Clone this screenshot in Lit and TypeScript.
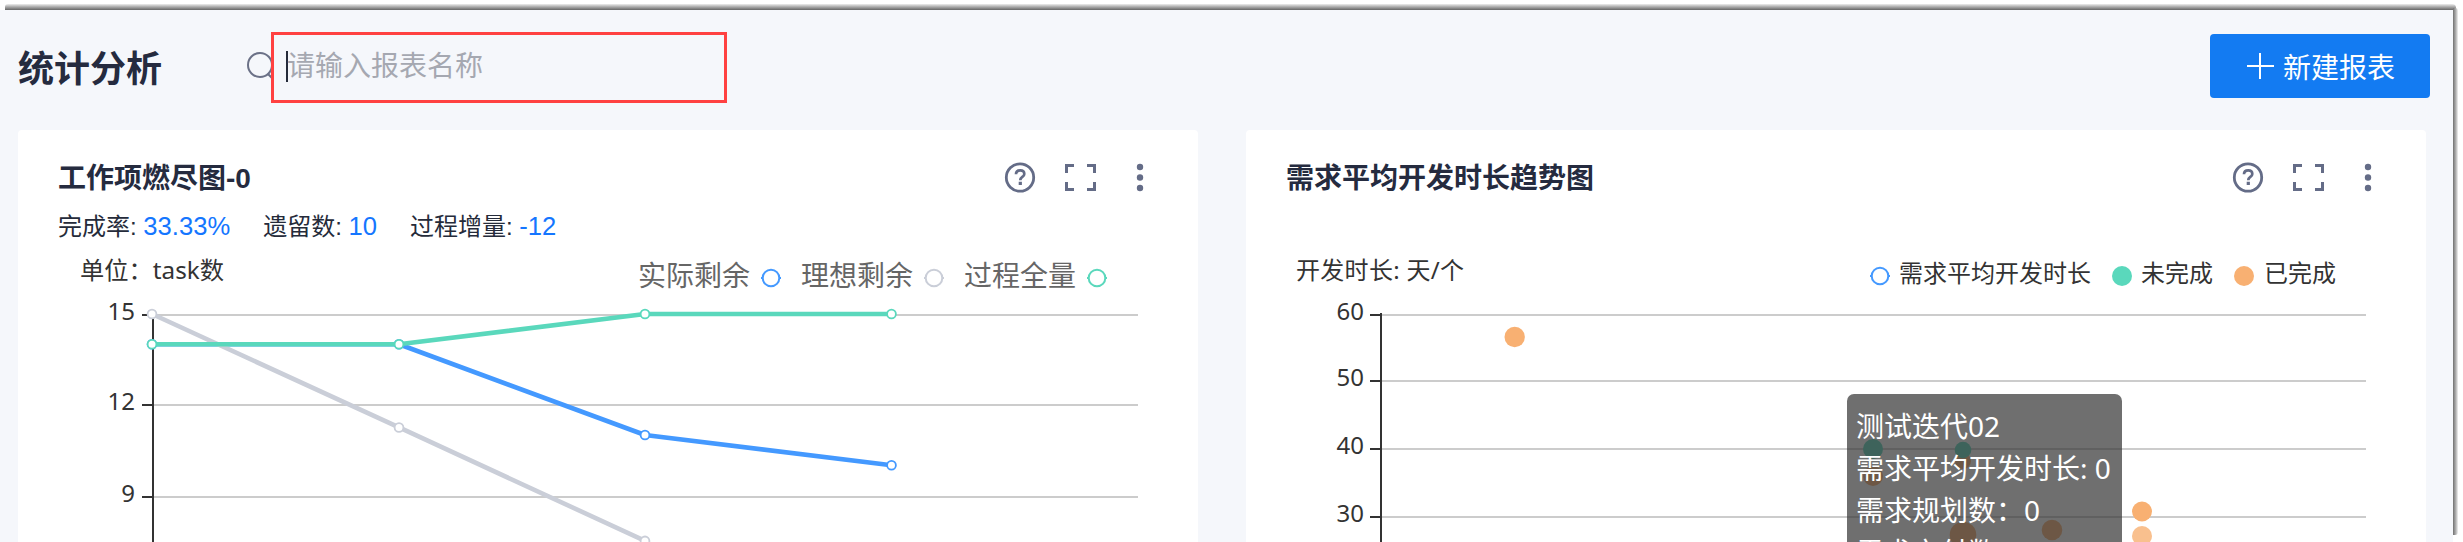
import { LitElement, html, svg, css } from "lit";
import { customElement, property } from "lit/decorators.js";

const FONT = css`"Noto Sans", "Noto Sans CJK SC", sans-serif`;

type Mark = { x: number; y: number; r: number; color: string; opacity?: number };

@customElement("report-card")
class ReportCard extends LitElement {
  @property() heading = "";
  static styles = css`
    :host { display: block; width: 1180px; height: 460px; background: #fff; border-radius: 4px; overflow: hidden; }
    .head { display: flex; align-items: flex-end; justify-content: space-between; height: 40px; padding: 27px 42px 0 40px; }
    h2 { margin: 0 0 -2px; font: 700 28px/40px "Liberation Sans", "Noto Sans CJK SC", sans-serif; color: #252b3f; white-space: nowrap; }
    .tools { display: flex; width: 152px; height: 40px; }
    svg { display: block; }
  `;
  render() {
    return html`
      <div class="head">
        <h2>${this.heading}</h2>
        <div class="tools">
          <svg width="152" height="40" viewBox="0 0 152 40" fill="none" stroke="#646c87">
            <circle cx="16" cy="20.5" r="13.7" stroke-width="2.8" />
            <path d="M12 17.2C12 14.6 13.7 13.3 16.2 13.3C18.7 13.3 20.3 14.7 20.3 16.9C20.3 20.1 16.3 19.8 16.3 23.2" stroke-width="2.7" />
            <path d="M16.3 24.7V28" stroke-width="3.2" />
            <path d="M62.5 16V8.5H70M83 8.5H90.5V16M90.5 25V32.5H83M70 32.5H62.5V25" stroke-width="3" />
            <g fill="#646c87" stroke="none"><circle cx="136" cy="10" r="3.2" /><circle cx="136" cy="20.5" r="3.2" /><circle cx="136" cy="31" r="3.2" /></g>
          </svg>
        </div>
      </div>
      <slot></slot>
    `;
  }
}

@customElement("burndown-chart")
class BurndownChart extends LitElement {
  static styles = css`
    :host { display: block; }
    svg { display: block; font-family: ${FONT}; font-size: 24px; }
    .stats { box-sizing: border-box; display: flex; gap: 33px; height: 40px; padding: 9px 0 0 40px; font: 24px/40px "Liberation Sans", "Noto Sans CJK SC", sans-serif; color: #252b3a; white-space: nowrap; }
    .stats b { font-weight: 400; font-size: 25.6px; color: #1476ff; }
    .label { fill: #333; }
    .legend { fill: #666; font-size: 28px; }
  `;
  private xs = [134, 381, 627, 873.5];
  private y(v: number) { return 77 + (15 - v) * 30.25; }
  private series(color: string, values: number[]) {
    const pts = values.map((v, i) => [this.xs[i], this.y(v)]);
    return svg`
      <polyline points=${pts.map((p) => p.join(",")).join(" ")} fill="none" stroke=${color} stroke-width="4.6" stroke-linejoin="bevel" />
      ${pts.map((p) => svg`<circle cx=${p[0]} cy=${p[1]} r="4.4" fill="#fff" stroke=${color} stroke-width="1.8" />`)}`;
  }
  render() {
    return html`
      <div class="stats">
        <span>完成率: <b>33.33%</b></span><span>遗留数: <b>10</b></span><span>过程增量: <b>-12</b></span>
      </div>
      <svg width="1180" height="305" viewBox="0 0 1180 305">
        <text class="label" x="62" y="42" textLength="144" lengthAdjust="spacingAndGlyphs">单位：task数</text>
        ${[["实际剩余", 620, "#4499ff"], ["理想剩余", 783, "#caced8"], ["过程全量", 946, "#5ad8bc"]].map(([t, x, c]) => svg`
          <text class="legend" x=${x} y="49">${t}</text>
          <path d="M${+x + 123} 41h20" stroke=${c} stroke-width="2" />
          <circle cx=${+x + 133} cy="41" r="8.3" fill="#fff" stroke=${c} stroke-width="2" />`)}
        ${[[15, 78], [12, 168], [9, 260]].map(([v, y]) => svg`
          <path d="M135 ${y}H1120" stroke="#ccc" stroke-width="2" />
          <path d="M124 ${y}h11" stroke="#333" stroke-width="2" />
          <text class="label" x="117" y=${y + 5} text-anchor="end">${v}</text>`)}
        <path d="M135 77V305" stroke="#333" stroke-width="2" />
        ${this.series("#4499ff", [14, 14, 11, 10])}
        ${this.series("#caced8", [15, 11.25, 7.5])}
        ${this.series("#5ad8bc", [14, 14, 15, 15])}
      </svg>
    `;
  }
}

@customElement("duration-chart")
class DurationChart extends LitElement {
  static styles = css`
    :host { display: block; padding-top: 40px; position: relative; }
    svg { display: block; font-family: ${FONT}; font-size: 24px; }
    .label { fill: #333; }
    .tip { position: absolute; left: 601px; top: 197px; width: 257px; height: 200px; padding: 11px 9px; border-radius: 7px; background: rgba(50, 50, 50, 0.7); color: #fff; font: 28px/42px ${FONT}; white-space: nowrap; }
    .tip p { margin: 0; }
  `;
  private dots: Mark[] = [
    { x: 268.7, y: 100, r: 10.2, color: "#f8b072" },
    { x: 627, y: 212, r: 10, color: "#5ad8bc" },
    { x: 627, y: 239, r: 10, color: "#f8b072" },
    { x: 717, y: 224, r: 8, color: "#f8b072" },
    { x: 717, y: 213, r: 8.3, color: "#5ad8bc" },
    { x: 717, y: 298, r: 13.3, color: "#f8b072" },
    { x: 806, y: 293, r: 10.3, color: "#f8b072" },
    { x: 896, y: 274.5, r: 10, color: "#f8b072" },
    { x: 896, y: 299, r: 10, color: "#f8b072", opacity: 0.8 },
  ];
  render() {
    return html`
      <svg width="1180" height="305" viewBox="0 0 1180 305">
        <text class="label" x="50" y="42" textLength="168">开发时长: 天/个</text>
        <path d="M624 39h20" stroke="#4499ff" stroke-width="2" />
        <circle cx="634" cy="39" r="8.3" fill="#fff" stroke="#4499ff" stroke-width="2" />
        <circle cx="876" cy="39" r="10" fill="#5ad8bc" />
        <circle cx="998" cy="39" r="10" fill="#f8b072" />
        <text class="label" x="653" y="45">需求平均开发时长</text>
        <text class="label" x="895" y="45">未完成</text>
        <text class="label" x="1018" y="45">已完成</text>
        ${[[60, 78], [50, 144], [40, 212], [30, 280]].map(([v, y]) => svg`
          <path d="M135 ${y}H1120" stroke="#ccc" stroke-width="2" />
          <path d="M124 ${y}h11" stroke="#333" stroke-width="2" />
          <text class="label" x="118" y=${y + 5} text-anchor="end">${v}</text>`)}
        <path d="M135 76V305" stroke="#333" stroke-width="2" />
        ${this.dots.map((d) => svg`<circle cx=${d.x} cy=${d.y} r=${d.r} fill=${d.color} fill-opacity=${d.opacity ?? 1} />`)}
      </svg>
      <div class="tip"><p>测试迭代02</p><p>需求平均开发时长: 0</p><p>需求规划数：0</p><p>需求交付数：0</p></div>
    `;
  }
}

@customElement("app-root")
class AppRoot extends LitElement {
  static styles = css`
    :host { display: block; position: relative; box-sizing: border-box; width: 2463px; height: 542px; padding: 10px 10px 0 0; overflow: hidden; background: #fff; }
    :host::before { content: ""; position: absolute; left: 5px; top: 4px; width: 2451px; height: 6px; border-radius: 3px 4px 0 0; background: linear-gradient(#eee, #bbb 35%, #666); }
    :host::after { content: ""; position: absolute; left: 2453px; top: 8px; width: 5px; height: 527px; border-radius: 0 3px 3px 0; background: linear-gradient(90deg, #707070, #b5b5b5 60%, #f2f2f2); }
    .page { display: flex; flex-direction: column; width: 2453px; height: 532px; background: #f5f7fb; }
    header { display: flex; height: 120px; }
    h1 { margin: 0; padding: 30px 0 0 18px; width: 228px; font: 700 36px/52px "Noto Sans CJK SC", sans-serif; color: #252b3f; white-space: nowrap; }
    .search { display: block; width: 25px; height: 30px; margin-top: 41px; overflow: hidden; }
    .field { box-sizing: border-box; display: flex; width: 456px; height: 71px; margin-top: 22px; border: 3px solid #ff4141; padding: 16px 0 0 12px; font: 28px/32px "Noto Sans CJK SC", sans-serif; color: #a5a8b1; }
    .field .hint { margin-top: -3px; margin-left: -1px; }
    .caret { width: 2px; height: 31px; background: #252b3a; }
    button { display: flex; align-items: center; gap: 9px; margin: 24px 23px 0 auto; width: 220px; height: 64px; border: 0; border-radius: 4px; padding: 0 0 0 37px; background: #137bf2; color: #fff; font: 28px/64px "Noto Sans CJK SC", sans-serif; white-space: nowrap; }
    main { display: flex; gap: 48px; padding-left: 18px; height: 412px; overflow: hidden; }
    report-card { flex: none; }
  `;
  render() {
    return html`
      <div class="page">
        <header>
          <h1>统计分析</h1>
          <svg class="search" width="25" height="30" viewBox="0 0 25 30" fill="none" stroke="#6b7187" stroke-width="2"><circle cx="14" cy="14" r="12" /><path d="M22 23l6 6" /></svg>
          <div class="field"><span class="caret"></span><span class="hint">请输入报表名称</span></div>
          <button><svg width="27" height="27" viewBox="0 0 27 27" stroke="#fff" stroke-width="2"><path d="M13 0V26M0 13H27" /></svg>新建报表</button>
        </header>
        <main>
          <report-card heading="工作项燃尽图-0"><burndown-chart></burndown-chart></report-card>
          <report-card heading="需求平均开发时长趋势图"><duration-chart></duration-chart></report-card>
        </main>
      </div>
    `;
  }
}
